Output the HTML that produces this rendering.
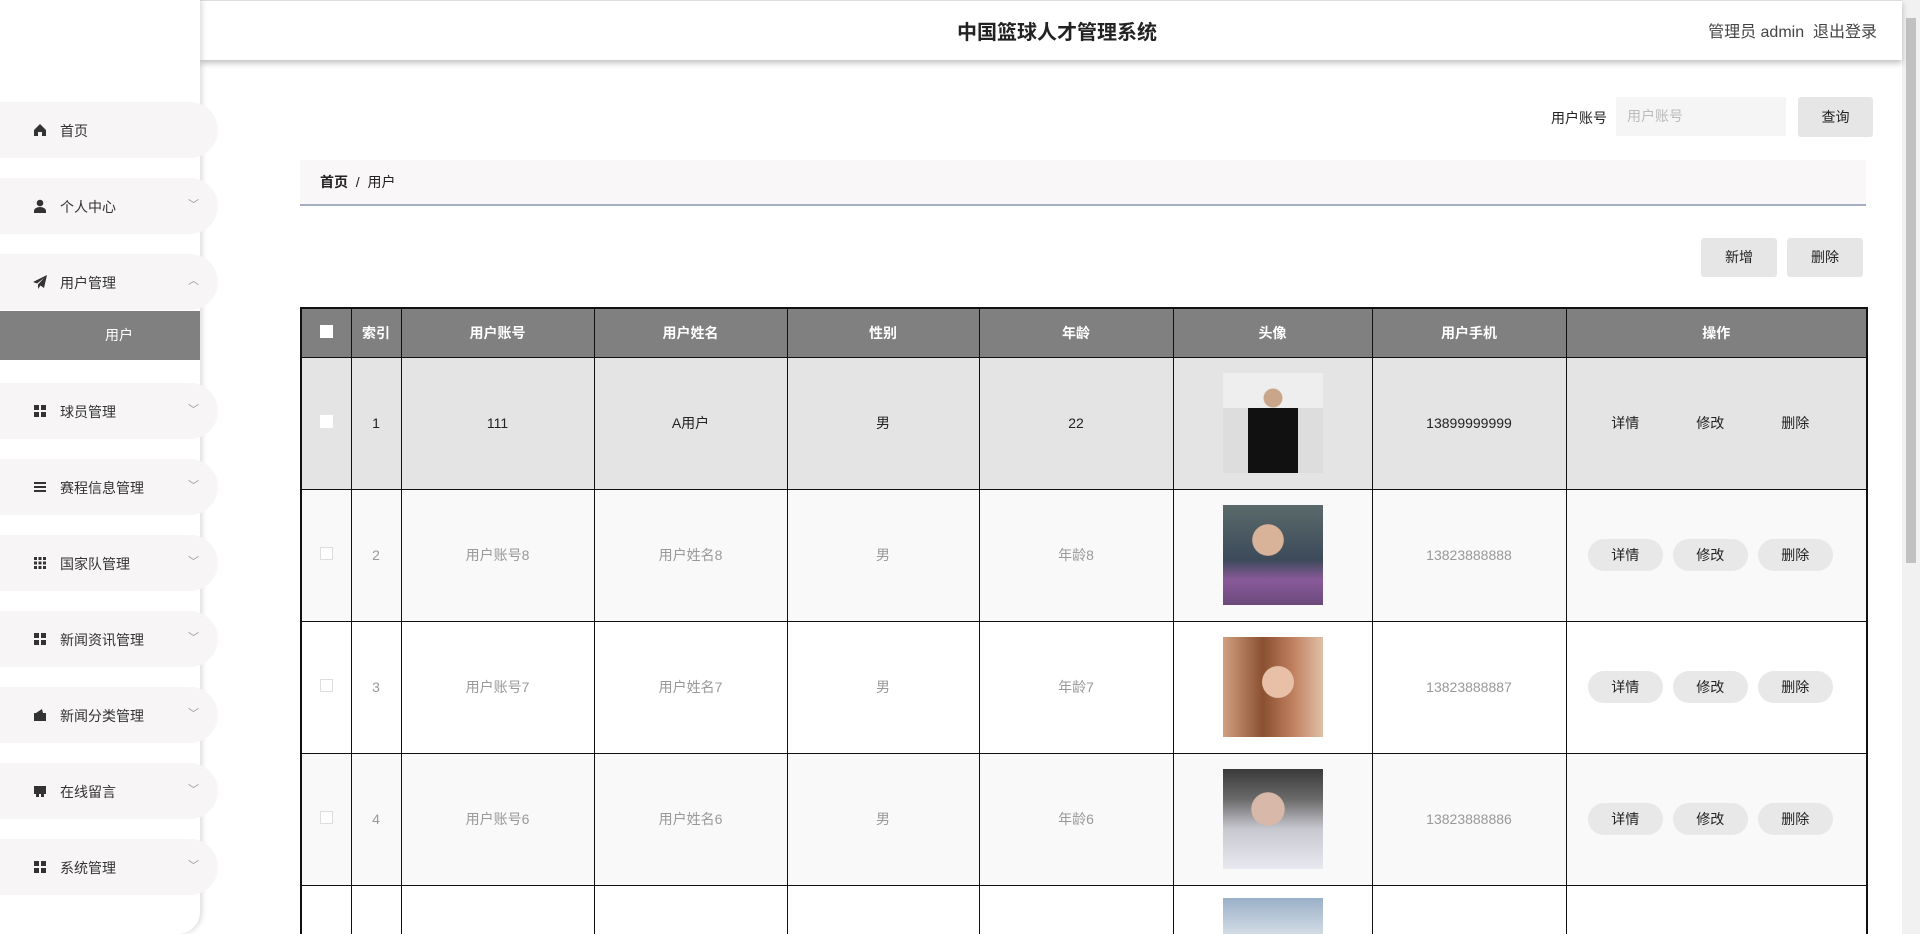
<!DOCTYPE html>
<html><head><meta charset="utf-8"><style>
*{margin:0;padding:0;box-sizing:border-box}
html{width:1920px;height:934px;overflow:hidden}
body{width:1920px;height:934px;overflow:hidden;background:#fff;font-family:"Liberation Sans","Noto Sans CJK SC",sans-serif;color:#333;position:relative}
.hdr{position:absolute;left:200px;top:0;width:1702px;height:60px;background:#fff;box-shadow:0 3px 6px rgba(0,0,0,.25);z-index:2;border-top:1px solid #ddd}
.hdr .t{position:absolute;left:0;right:0;top:15px;text-align:center;font-size:20px;font-weight:bold;color:#222;padding-left:12px}
.hdr .r{position:absolute;right:25px;top:17px;font-size:16px;color:#444}
.scroll{position:absolute;left:1902px;top:0;width:18px;height:934px;background:#f1f1f1}
.scroll div{position:absolute;left:4px;top:18px;width:10px;height:545px;background:#c1c1c1}
.side{position:absolute;left:0;top:0;width:200px;height:934px;background:#fff;box-shadow:2px 0 6px rgba(0,0,0,.15);border-bottom-right-radius:22px;z-index:3}
.mi{position:absolute;left:0;width:218px;height:56px;background:#f7f5f5;border-radius:0 28px 28px 0;font-size:14px;color:#333}
.mi .ic{position:absolute;left:33px;top:21px;width:14px;height:14px}
.mi .tx{position:absolute;left:60px;top:19px}
.mi .ch{position:absolute;left:188px;top:18px;font-size:11px;color:#999}
.sub{position:absolute;left:0;top:311px;width:200px;height:49px;background:#808080;color:#fff;font-size:14px;text-align:center;line-height:49px;padding-left:38px}
.lab{position:absolute;left:1551px;top:108px;font-size:14px;color:#222}
.inp{position:absolute;left:1616px;top:97px;width:170px;height:39px;background:#f5f5f5;font-size:14px;color:#bbb;line-height:39px;padding-left:11px}
.btn{position:absolute;background:#e6e6e6;font-size:14px;color:#222;text-align:center;border-radius:3px}
.bc{position:absolute;left:300px;top:160px;width:1566px;height:46px;background:#f9f7f7;border-bottom:2px solid #a6adc4;font-size:14px;line-height:44px;padding-left:20px;color:#222}
.tw{position:absolute;left:300px;top:307px;width:1568px;height:627px;overflow:hidden}
table{border-collapse:collapse;border:2px solid #111;table-layout:fixed}
td,th{border:1px solid #111;text-align:center;font-size:14px}
th{background:#808080;color:#fff;height:49px;font-weight:bold}
td{height:132px;color:#999}
tr.r1 td{background:#e4e4e4;color:#222}
tr.r2 td{background:#f9f9f9}
tr.r3 td{background:#fff}
tr.r4 td{background:#f9f9f9}
tr.r5 td{background:#fff}
.cb{display:inline-block;width:13px;height:13px;background:#fff;border:1px solid #ddd}
.img{display:inline-block;width:100px;height:100px;vertical-align:middle}
.opc{padding-right:12px}
.op{display:inline-block;width:75px;height:32px;line-height:32px;border-radius:16px;background:#e8e8e8;color:#222;margin:0 5px}
tr.r1 .op{background:none}
</style></head><body>
<div class="hdr"><div class="t">中国篮球人才管理系统</div><div class="r">管理员 admin &nbsp;退出登录</div></div>
<div class="scroll"><div></div></div>
<div class="side">
<div class="mi" style="top:102px"><svg class="ic" viewBox="0 0 14 14"><path d="M7 1L1 7v6h4V9h4v4h4V7z" fill="#333"/></svg><span class="tx">首页</span></div>
<div class="mi" style="top:178px"><svg class="ic" viewBox="0 0 14 14"><circle cx="7" cy="4" r="3.3" fill="#333"/><path d="M1 14v-2c0-2.5 3-4 6-4s6 1.5 6 4v2z" fill="#333"/></svg><span class="tx">个人中心</span><span class="ch">﹀</span></div>
<div class="mi" style="top:254px"><svg class="ic" viewBox="0 0 14 14"><path d="M14 0L0 7l4 1.5L11 3 5 9.5V14l2.5-3.5L11 13z" fill="#333"/></svg><span class="tx">用户管理</span><span class="ch">︿</span></div>
<div class="sub">用户</div>
<div class="mi" style="top:383px"><svg class="ic" viewBox="0 0 14 14"><rect x="1" y="1" width="5" height="5" fill="#333"/><rect x="8" y="1" width="5" height="5" fill="#333"/><rect x="1" y="8" width="5" height="5" fill="#333"/><rect x="8" y="8" width="5" height="5" fill="#333"/></svg><span class="tx">球员管理</span><span class="ch">﹀</span></div>
<div class="mi" style="top:459px"><svg class="ic" viewBox="0 0 14 14"><rect x="1" y="2" width="12" height="2" fill="#333"/><rect x="1" y="6" width="12" height="2" fill="#333"/><rect x="1" y="10" width="12" height="2" fill="#333"/></svg><span class="tx">赛程信息管理</span><span class="ch">﹀</span></div>
<div class="mi" style="top:535px"><svg class="ic" viewBox="0 0 14 14"><g fill="#333"><rect x="1" y="1" width="3" height="3"/><rect x="5.5" y="1" width="3" height="3"/><rect x="10" y="1" width="3" height="3"/><rect x="1" y="5.5" width="3" height="3"/><rect x="5.5" y="5.5" width="3" height="3"/><rect x="10" y="5.5" width="3" height="3"/><rect x="1" y="10" width="3" height="3"/><rect x="5.5" y="10" width="3" height="3"/><rect x="10" y="10" width="3" height="3"/></g></svg><span class="tx">国家队管理</span><span class="ch">﹀</span></div>
<div class="mi" style="top:611px"><svg class="ic" viewBox="0 0 14 14"><rect x="1" y="1" width="5" height="5" fill="#333"/><rect x="8" y="1" width="5" height="5" fill="#333"/><rect x="1" y="8" width="5" height="5" fill="#333"/><rect x="8" y="8" width="5" height="5" fill="#333"/></svg><span class="tx">新闻资讯管理</span><span class="ch">﹀</span></div>
<div class="mi" style="top:687px"><svg class="ic" viewBox="0 0 14 14"><path d="M1 5h12v8H1z M3 5l6-4 1 4" fill="#333"/></svg><span class="tx">新闻分类管理</span><span class="ch">﹀</span></div>
<div class="mi" style="top:763px"><svg class="ic" viewBox="0 0 14 14"><path d="M1 2h12v8H1z M3 10h3v3H3zM8 10h3v3H8z" fill="#333"/></svg><span class="tx">在线留言</span><span class="ch">﹀</span></div>
<div class="mi" style="top:839px"><svg class="ic" viewBox="0 0 14 14"><rect x="1" y="1" width="5" height="5" fill="#333"/><rect x="8" y="1" width="5" height="5" fill="#333"/><rect x="1" y="8" width="5" height="5" fill="#333"/><rect x="8" y="8" width="5" height="5" fill="#333"/></svg><span class="tx">系统管理</span><span class="ch">﹀</span></div>
</div>
<div class="lab">用户账号</div>
<div class="inp">用户账号</div>
<div class="btn" style="left:1798px;top:97px;width:75px;height:40px;line-height:40px">查询</div>
<div class="bc"><b>首页</b> &nbsp;/&nbsp; 用户</div>
<div class="btn" style="left:1701px;top:238px;width:76px;height:39px;line-height:39px">新增</div>
<div class="btn" style="left:1787px;top:238px;width:76px;height:39px;line-height:39px">删除</div>
<div class="tw">
<table>
<colgroup><col style="width:50px"><col style="width:50px"><col style="width:193px"><col style="width:193px"><col style="width:192px"><col style="width:194px"><col style="width:199px"><col style="width:194px"><col style="width:301px"></colgroup>
<tr><th><span class="cb" style="border:none"></span></th><th>索引</th><th>用户账号</th><th>用户姓名</th><th>性别</th><th>年龄</th><th>头像</th><th>用户手机</th><th>操作</th></tr>
<tr class="r1"><td><span class="cb" style="border:none"></span></td><td>1</td><td>111</td><td>A用户</td><td>男</td><td>22</td><td><span class="img" style="background:radial-gradient(circle at 50% 25%,#c9a58a 0 10%,transparent 11%),linear-gradient(to bottom,#eee 0,#eee 35%,transparent 35%),linear-gradient(90deg,#ddd 0,#ddd 25%,#111 25%,#111 75%,#ddd 75%)"></span></td><td>13899999999</td><td class="opc"><span class="op">详情</span><span class="op">修改</span><span class="op">删除</span></td></tr>
<tr class="r2"><td><span class="cb"></span></td><td>2</td><td>用户账号8</td><td>用户姓名8</td><td>男</td><td>年龄8</td><td><span class="img" style="background:radial-gradient(circle at 45% 35%,#d8b39a 0 18%,transparent 19%),linear-gradient(#5a6a6a 0,#3c4a5a 55%,#8a5a9a 75%,#6a4a7a)"></span></td><td>13823888888</td><td class="opc"><span class="op">详情</span><span class="op">修改</span><span class="op">删除</span></td></tr>
<tr class="r3"><td><span class="cb"></span></td><td>3</td><td>用户账号7</td><td>用户姓名7</td><td>男</td><td>年龄7</td><td><span class="img" style="background:radial-gradient(circle at 55% 45%,#e8c0a8 0 20%,transparent 21%),linear-gradient(90deg,#d0a080,#8a5030 40%,#c08060 70%,#e0c0a8)"></span></td><td>13823888887</td><td class="opc"><span class="op">详情</span><span class="op">修改</span><span class="op">删除</span></td></tr>
<tr class="r4"><td><span class="cb"></span></td><td>4</td><td>用户账号6</td><td>用户姓名6</td><td>男</td><td>年龄6</td><td><span class="img" style="background:radial-gradient(circle at 45% 40%,#d8b8a8 0 20%,transparent 21%),linear-gradient(#3a3a3a 0,#6a6a6a 30%,#c8c8d0 60%,#e8e8f0)"></span></td><td>13823888886</td><td class="opc"><span class="op">详情</span><span class="op">修改</span><span class="op">删除</span></td></tr>
<tr class="r5"><td></td><td></td><td></td><td></td><td></td><td></td><td style="vertical-align:top;padding-top:12px"><span class="img" style="background:linear-gradient(#9ab0c8,#d8e0e8 40%,#c0c8d0)"></span></td><td></td><td></td></tr>
</table>
</div>
</body></html>
